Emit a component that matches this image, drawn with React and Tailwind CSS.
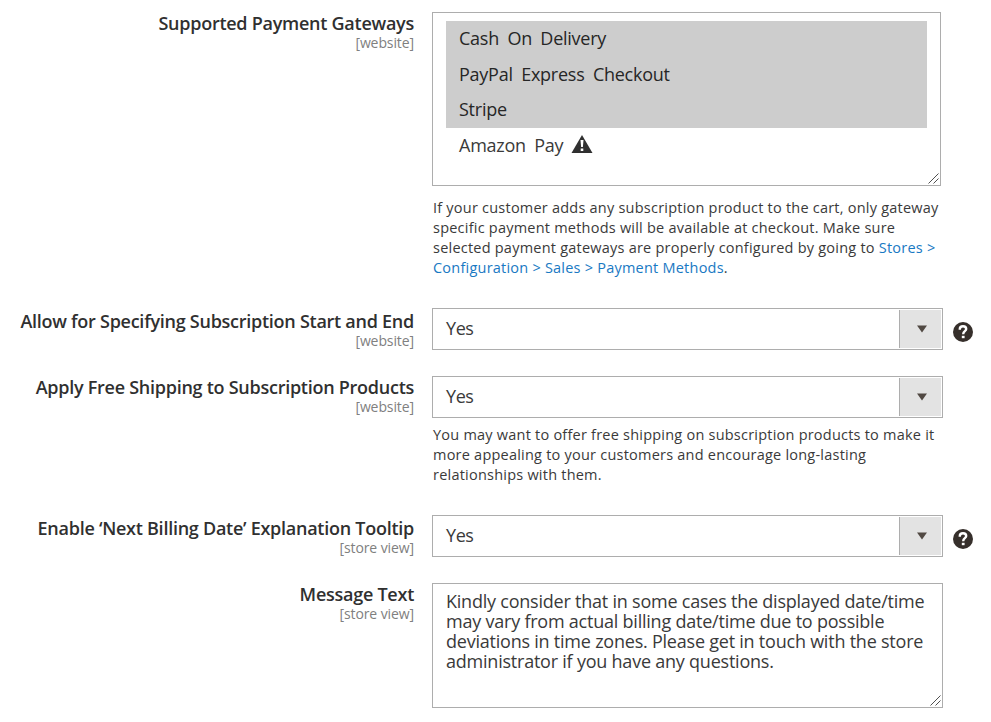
import React from "react"

function Label({ text, scope, className }) {
    return (
        <div className={"w-[414px] shrink-0 text-right " + className}>
            <div className="text-[18px] leading-[20px] font-semibold tracking-[-0.26px] text-[#303030] whitespace-nowrap">{text}</div>
            <div className="mt-px text-[14px] leading-[18px] tracking-[-0.1px] text-[#808080]">[{scope}]</div>
        </div>
    )
}

function Select({ value }) {
    return (
        <div className="flex w-[511px] h-[42px] border border-[#adadad] bg-white p-px">
            <div className="flex-1 pl-[12px] text-[18px] leading-[37px] tracking-[-0.4px]">{value}</div>
            <div className="w-[42px] border-l border-[#adadad] bg-[#e3e3e3] flex items-center justify-center">
                <svg className="ml-[3px]" width="10" height="8" viewBox="0 0 10 8">
                    <path d="M0 0.5h10L5 7.5z" fill="#514943" />
                </svg>
            </div>
        </div>
    )
}

function Help() {
    return (
        <svg className="ml-[10px] mt-[14px] shrink-0" width="20" height="20" viewBox="0 0 20 20" fill="none">
            <circle cx="10" cy="10" r="10" fill="#362f2b" />
            <path d="M6.800 7.800V7C6.800 4.800 8 4.200 10 4.200S13.200 5.200 13.200 7C13.200 9.400 10.200 9 10.200 12.200" stroke="#fff" strokeWidth="2.400" />
            <path d="M8.800 13.800h2.800v2.400H8.800z" fill="#fff" />
        </svg>
    )
}

function Grip({ className }) {
    return (
        <svg className={className} width="11" height="11" viewBox="0 0 11 11" stroke="#505050" strokeWidth="1">
            <path d="M0.500 10.500L10.500 0.500M5.500 10.500L10.500 5.500" />
        </svg>
    )
}

const gateways = ["Cash On Delivery", "PayPal Express Checkout", "Stripe"]

const message = [
    "Kindly consider that in some cases the displayed date/time",
    "may vary from actual billing date/time due to possible",
    "deviations in time zones. Please get in touch with the store",
    "administrator if you have any questions.",
]

export default function App() {
    return (
        <div className="w-[991px] h-[722px] overflow-hidden bg-white pt-[12px] font-['Open_Sans',sans-serif] text-[#3a3a3a]">
            <div className="flex h-[296px]">
                <Label className="pt-px" text="Supported Payment Gateways" scope="website" />
                <div className="ml-[18px]">
                    <div className="relative w-[509px] h-[174px] border border-[#adadad] px-[13px] pt-[8px] text-[18px] leading-[35.6px] tracking-[-0.25px] [word-spacing:4px]">
                        <div className="h-[107px] bg-[#cdcdcd] text-[#262626]">
                            {gateways.map((g) => (
                                <div key={g} className="pl-[13px] h-[35.6px]">{g}</div>
                            ))}
                        </div>
                        <div className="pl-[13px] flex items-center">
                            Amazon Pay
                            <svg className="ml-[8px] -mt-[4px]" width="22" height="20" viewBox="0 0 22 20">
                                <path d="M11 1L21.500 19H0.500z" fill="#303030" />
                                <path d="M9.500 6h3l-.6 7h-1.800zM9.700 14.500h2.600v2.500H9.700z" fill="#fff" />
                            </svg>
                        </div>
                        <Grip className="absolute right-px bottom-px" />
                    </div>
                    <p className="mt-[12px] ml-px text-[14.5px] leading-[20px] tracking-[0.225px] whitespace-nowrap">
                        If your customer adds any subscription product to the cart, only gateway<br />
                        specific payment methods will be available at checkout. Make sure<br />
                        selected payment gateways are properly configured by going to <a className="text-[#1979c3]">Stores &gt;</a><br />
                        <a className="text-[#1979c3]">Configuration &gt; Sales &gt; Payment Methods</a>.
                    </p>
                </div>
            </div>
            <div className="flex h-[68px]">
                <Label className="pt-[3px]" text="Allow for Specifying Subscription Start and End" scope="website" />
                <div className="ml-[18px]"><Select value="Yes" /></div>
                <Help />
            </div>
            <div className="flex h-[139px]">
                <Label className="pt-px" text="Apply Free Shipping to Subscription Products" scope="website" />
                <div className="ml-[18px]">
                    <Select value="Yes" />
                    <p className="mt-[7px] ml-px text-[14.5px] leading-[20px] tracking-[0.225px] whitespace-nowrap">
                        You may want to offer free shipping on subscription products to make it<br />
                        more appealing to your customers and encourage long-lasting<br />
                        relationships with them.
                    </p>
                </div>
            </div>
            <div className="flex h-[68px]">
                <Label className="pt-[3px]" text="Enable ‘Next Billing Date’ Explanation Tooltip" scope="store view" />
                <div className="ml-[18px]"><Select value="Yes" /></div>
                <Help />
            </div>
            <div className="flex">
                <Label className="pt-px" text="Message Text" scope="store view" />
                <div className="relative ml-[18px] w-[511px] h-[125px] border border-[#adadad] px-[13px] pt-[7px] text-[18px] leading-[20px] tracking-[-0.225px] whitespace-nowrap">
                    {message.map((line) => (
                        <div key={line}>{line}</div>
                    ))}
                    <Grip className="absolute right-px bottom-px" />
                </div>
            </div>
        </div>
    )
}
